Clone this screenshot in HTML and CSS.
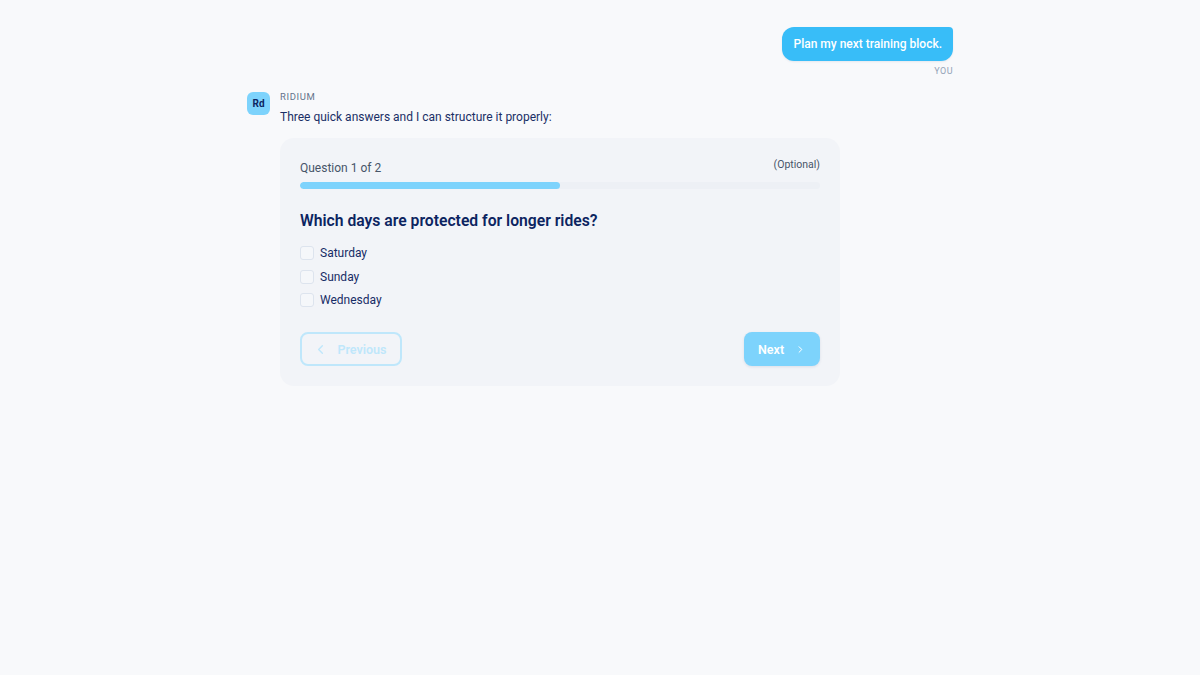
FILE: index.html
```html
<!DOCTYPE html>
<html>
<head>
  <meta charset="utf-8">
  <title>Ridium</title>
  <link rel="stylesheet" href="styles.css">
</head>
<body>
  <div class="chat">
    <div class="msg-user">
      <div class="bubble">Plan my next training block.</div>
      <div class="who">YOU</div>
    </div>

    <div class="msg-bot">
      <div class="avatar">Rd</div>
      <div class="bot-body">
        <div class="bot-name">RIDIUM</div>
        <div class="bot-text">Three quick answers and I can structure it properly:</div>

        <div class="card">
          <div class="card-top">
            <span class="step">Question 1 of 2</span>
            <span class="opt">(Optional)</span>
          </div>
          <div class="track"><div class="fill" style="width: 50%"></div></div>

          <h2 class="q">Which days are protected for longer rides?</h2>

          <div class="choices">
            <label class="choice"><span class="box"></span>Saturday</label>
            <label class="choice"><span class="box"></span>Sunday</label>
            <label class="choice"><span class="box"></span>Wednesday</label>
          </div>

          <div class="nav">
            <button class="btn-prev">
              <svg width="15" height="15" viewBox="0 0 24 24" fill="none" stroke="currentColor" stroke-width="2.2" stroke-linecap="round" stroke-linejoin="round"><path d="M15 18l-6-6 6-6"/></svg>
              Previous
            </button>
            <button class="btn-next">
              Next
              <svg width="15" height="15" viewBox="0 0 24 24" fill="none" stroke="currentColor" stroke-width="2.2" stroke-linecap="round" stroke-linejoin="round"><path d="M9 18l6-6-6-6"/></svg>
            </button>
          </div>
        </div>
      </div>
    </div>
  </div>
</body>
</html>
```

FILE: styles.css
```css
body { margin: 0; background: #f8f9fb; font-family: Roboto, "Noto Sans", sans-serif; color: #0f2a5e; }
.chat { width: 706px; margin: 0 auto; padding-top: 27px; }

.msg-user { display: flex; flex-direction: column; align-items: flex-end; }
.bubble { background: #38bdf8; color: #fff; font-size: 12px; font-weight: 500; height: 34px; line-height: 34px; padding: 0 11px; border-radius: 12px 4px 12px 12px; box-shadow: 0 1px 2px rgba(15, 42, 94, 0.08); }
.who { font-size: 9px; color: #94a3b8; letter-spacing: 0.5px; margin-top: 5px; }

.msg-bot { display: flex; gap: 10px; margin-top: 13px; }
.avatar { width: 23px; height: 23px; flex: none; border-radius: 6px; background: #7dd3fc; color: #0c2461; font-size: 10px; font-weight: 700; display: flex; align-items: center; justify-content: center; margin-top: 3px; }
.bot-body { flex: 1; }
.bot-name { font-size: 9.5px; font-weight: 400; color: #64748b; letter-spacing: 0.6px; line-height: 12px; margin-top: 2px; }
.bot-text { font-size: 12px; line-height: 18px; margin-top: 5px; color: #1a2f66; }

.card { width: 520px; margin-top: 12px; background: #f2f4f8; border-radius: 14px; padding: 20px; }
.card-top { display: flex; justify-content: space-between; align-items: flex-start; height: 18px; }
.step { font-size: 12px; color: #475569; line-height: 18px; margin-top: 1px; }
.opt { font-size: 10.5px; color: #475569; line-height: 14px; }
.track { height: 7px; border-radius: 4px; background: #edf0f5; margin-top: 6px; overflow: hidden; }
.fill { height: 100%; background: #7dd3fc; border-radius: 4px; }

.q { font-size: 15.7px; font-weight: 600; color: #0c2461; margin: 22px 0 0; line-height: 20px; }

.choices { margin-top: 13px; display: flex; flex-direction: column; gap: 5.5px; }
.choice { display: flex; align-items: center; gap: 6px; font-size: 12px; color: #172c66; line-height: 18px; }
.box { width: 12px; height: 12px; border: 1px solid #dde4ee; border-radius: 3px; background: #f5f7fa; }

.nav { display: flex; justify-content: space-between; margin-top: 23px; }
.btn-prev, .btn-next { font-family: inherit; font-size: 12.5px; font-weight: 600; height: 34px; border-radius: 8px; display: flex; align-items: center; gap: 6px; cursor: pointer; }
.btn-prev { width: 102px; background: transparent; border: 2px solid #bfe7fb; color: #bfe7fb; justify-content: center; padding: 0 12px 0 10px; gap: 9px; }
.btn-next { width: 76px; background: #7dd3fc; border: none; color: #fff; padding: 0 14px; justify-content: center; gap: 11px; box-shadow: 0 1px 3px rgba(15, 42, 94, 0.1); }
```
